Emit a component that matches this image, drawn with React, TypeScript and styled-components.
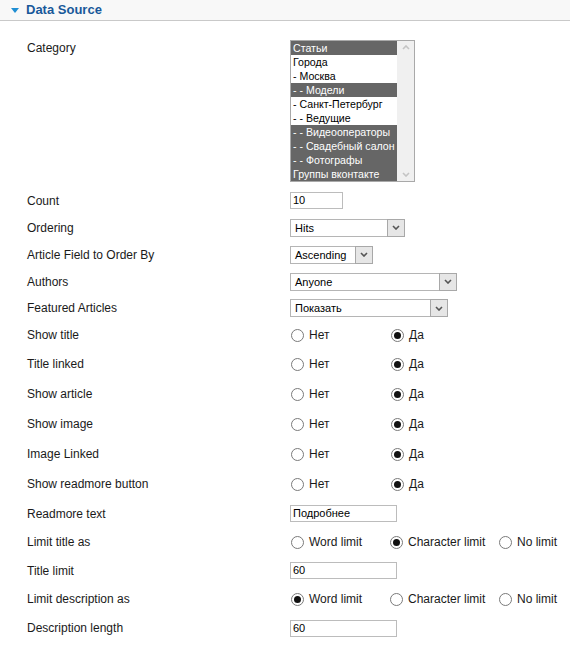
import styled, { createGlobalStyle } from "styled-components";

const GlobalStyle = createGlobalStyle`
  body {
    margin: 0;
    background: #fff;
    font-family: "Liberation Sans", Arial, sans-serif;
  }
`;

const Panel = styled.div`
  width: 570px;
`;

const Header = styled.div`
  display: flex;
  align-items: center;
  gap: 7px;
  height: 20px;
  padding-left: 11px;
  background: #f8f8f8;
  border-bottom: 1px solid #c9c9c9;
`;

const Triangle = styled.span`
  width: 0;
  height: 0;
  border-left: 4px solid transparent;
  border-right: 4px solid transparent;
  border-top: 5px solid #1f8ed3;
  margin-top: 1px;
`;

const Title = styled.h3`
  margin: 0;
  font-size: 13px;
  font-weight: bold;
  color: #18589a;
  line-height: 20px;
`;

const Form = styled.div`
  display: flex;
  flex-direction: column;
  padding: 17px 0 0 27px;
`;

const Row = styled.div<{ $h: number; $top?: boolean }>`
  display: flex;
  align-items: ${(p) => (p.$top ? "flex-start" : "center")};
  height: ${(p) => p.$h}px;
`;

const Label = styled.div<{ $top?: boolean }>`
  width: 263px;
  flex-shrink: 0;
  font-size: 12px;
  line-height: 14px;
  color: #1a1a1a;
  padding-top: ${(p) => (p.$top ? "3px" : "0")};
`;

const ListBox = styled.div`
  display: flex;
  margin-top: 2px;
  width: 123px;
  height: 140px;
  border: 1px solid #a9a9a9;
  background: #fff;
`;

const Options = styled.div`
  flex: 1;
  display: flex;
  flex-direction: column;
  overflow: hidden;
`;

const Option = styled.div<{ $selected?: boolean }>`
  height: 14px;
  line-height: 14px;
  font-size: 10.6px;
  padding-left: 2px;
  white-space: nowrap;
  overflow: hidden;
  background: ${(p) => (p.$selected ? "#666666" : "#fff")};
  color: ${(p) => (p.$selected ? "#fff" : "#000")};
`;

const ScrollBar = styled.div`
  width: 17px;
  background: #f0f0f0;
  display: flex;
  flex-direction: column;
  justify-content: space-between;
  align-items: center;
  padding: 4px 0;
`;

const TextInput = styled.div<{ $w: number }>`
  width: ${(p) => p.$w}px;
  height: 15px;
  border: 1px solid #bcbcbc;
  font-size: 11px;
  line-height: 15px;
  padding-left: 2px;
  color: #000;
  box-sizing: content-box;
`;

const Select = styled.div<{ $w: number }>`
  display: flex;
  align-items: stretch;
  width: ${(p) => p.$w}px;
  height: 16px;
  border: 1px solid #b5b5b5;
  background: #fff;
`;

const SelectText = styled.div`
  flex: 1;
  font-size: 11px;
  line-height: 16px;
  padding-left: 4px;
  color: #000;
`;

const SelectButton = styled.div`
  width: 16px;
  display: flex;
  align-items: center;
  justify-content: center;
  background: #e6e6e6;
  border: 1px solid #a8a8a8;
  margin: -1px -1px -1px 0;
`;

const RadioGroup = styled.div`
  display: flex;
  align-items: center;
`;

const RadioOption = styled.label<{ $w?: number }>`
  display: flex;
  align-items: center;
  gap: 5px;
  width: ${(p) => (p.$w ? `${p.$w}px` : "auto")};
  padding-left: 1px;
  font-size: 12px;
  color: #1a1a1a;
`;

const RadioCircle = styled.span<{ $checked?: boolean }>`
  position: relative;
  width: 11px;
  height: 11px;
  border: 1px solid #7a7a7a;
  border-radius: 50%;
  background: #fff;
  &::after {
    content: "";
    display: ${(p) => (p.$checked ? "block" : "none")};
    position: absolute;
    left: 2px;
    top: 2px;
    width: 7px;
    height: 7px;
    border-radius: 50%;
    background: #111;
  }
`;

const Chevron = ({ color, up }: { color: string; up?: boolean }) => (
  <svg width="8" height="5" viewBox="0 0 8 5">
    <path
      d={up ? "M1 4 L4 1 L7 4" : "M1 1 L4 4 L7 1"}
      fill="none"
      stroke={color}
      strokeWidth="1.6"
    />
  </svg>
);

const categories = [
  { t: "Статьи", s: true },
  { t: "Города", s: false },
  { t: "- Москва", s: false },
  { t: "- - Модели", s: true },
  { t: "- Санкт-Петербург", s: false },
  { t: "- - Ведущие", s: false },
  { t: "- - Видеооператоры", s: true },
  { t: "- - Свадебный салон", s: true },
  { t: "- - Фотографы", s: true },
  { t: "Группы вконтакте", s: true },
];

const DropDown = ({ w, value }: { w: number; value: string }) => (
  <Select $w={w}>
    <SelectText>{value}</SelectText>
    <SelectButton>
      <Chevron color="#555" />
    </SelectButton>
  </Select>
);

type Choice = { label: string; checked?: boolean; w?: number };

const Radios = ({ items }: { items: Choice[] }) => (
  <RadioGroup>
    {items.map((c) => (
      <RadioOption key={c.label} $w={c.w}>
        <RadioCircle $checked={c.checked} />
        {c.label}
      </RadioOption>
    ))}
  </RadioGroup>
);

const yesNo: Choice[] = [
  { label: "Нет", w: 99 },
  { label: "Да", checked: true },
];

const yesNoRows: [string, number][] = [
  ["Show title", 28],
  ["Title linked", 30],
  ["Show article", 30],
  ["Show image", 30],
  ["Image Linked", 30],
  ["Show readmore button", 30],
];

const limits = (sel: number): Choice[] => [
  { label: "Word limit", w: 98, checked: sel === 0 },
  { label: "Character limit", w: 108, checked: sel === 1 },
  { label: "No limit", checked: sel === 2 },
];

export default function App() {
  return (
    <Panel>
      <GlobalStyle />
      <Header>
        <Triangle />
        <Title>Data Source</Title>
      </Header>
      <Form>
        <Row $h={149} $top>
          <Label $top>Category</Label>
          <ListBox>
            <Options>
              {categories.map((c) => (
                <Option key={c.t} $selected={c.s}>
                  {c.t}
                </Option>
              ))}
            </Options>
            <ScrollBar>
              <Chevron color="#c4c4c4" up />
              <Chevron color="#c4c4c4" />
            </ScrollBar>
          </ListBox>
        </Row>
        <Row $h={27}>
          <Label>Count</Label>
          <TextInput $w={49}>10</TextInput>
        </Row>
        <Row $h={27}>
          <Label>Ordering</Label>
          <DropDown w={113} value="Hits" />
        </Row>
        <Row $h={27}>
          <Label>Article Field to Order By</Label>
          <DropDown w={81} value="Ascending" />
        </Row>
        <Row $h={27}>
          <Label>Authors</Label>
          <DropDown w={165} value="Anyone" />
        </Row>
        <Row $h={26}>
          <Label>Featured Articles</Label>
          <DropDown w={156} value="Показать" />
        </Row>
        {yesNoRows.map(([label, h]) => (
          <Row key={label} $h={h}>
            <Label>{label}</Label>
            <Radios items={yesNo} />
          </Row>
        ))}
        <Row $h={29}>
          <Label>Readmore text</Label>
          <TextInput $w={103}>Подробнее</TextInput>
        </Row>
        <Row $h={28}>
          <Label>Limit title as</Label>
          <Radios items={limits(1)} />
        </Row>
        <Row $h={29}>
          <Label>Title limit</Label>
          <TextInput $w={103}>60</TextInput>
        </Row>
        <Row $h={28}>
          <Label>Limit description as</Label>
          <Radios items={limits(0)} />
        </Row>
        <Row $h={30}>
          <Label>Description length</Label>
          <TextInput $w={103}>60</TextInput>
        </Row>
      </Form>
    </Panel>
  );
}
